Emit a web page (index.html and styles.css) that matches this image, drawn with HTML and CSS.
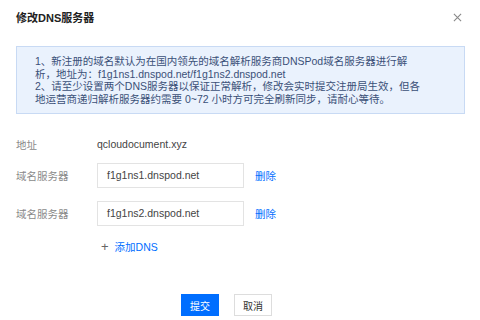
FILE: index.html
```html
<!DOCTYPE html>
<html lang="zh-CN">
<head>
<meta charset="utf-8">
<title>修改DNS服务器</title>
<link rel="stylesheet" href="styles.css">
</head>
<body>
<div class="dialog">
  <div class="header">
    <h1 class="title">修改DNS服务器</h1>
    <svg class="close" viewBox="0 0 10 10" width="9" height="9"><path d="M1 1L9 9M9 1L1 9" stroke="#888" stroke-width="1.2" fill="none"/></svg>
  </div>
  <div class="tip">
    1、新注册的域名默认为在国内领先的域名解析服务商DNSPod域名服务器进行解<br>
    析，地址为：f1g1ns1.dnspod.net/f1g1ns2.dnspod.net<br>
    2、请至少设置两个DNS服务器以保证正常解析，修改会实时提交注册局生效，但各<br>
    地运营商递归解析服务器约需要 0~72 小时方可完全刷新同步，请耐心等待。
  </div>
  <div class="form">
    <div class="row row-text">
      <span class="label">地址</span>
      <span class="value">qcloudocument.xyz</span>
    </div>
    <div class="row">
      <span class="label">域名服务器</span>
      <div class="input">f1g1ns1.dnspod.net</div>
      <a class="link">删除</a>
    </div>
    <div class="row">
      <span class="label">域名服务器</span>
      <div class="input">f1g1ns2.dnspod.net</div>
      <a class="link">删除</a>
    </div>
    <div class="row add-row">
      <span class="label"></span>
      <span class="plus">+</span>
      <a class="link">添加DNS</a>
    </div>
  </div>
  <div class="footer">
    <button class="btn primary">提交</button>
    <button class="btn">取消</button>
  </div>
</div>
</body>
</html>
```
FILE: styles.css
```css
html, body {
  margin: 0;
  padding: 0;
  background: #fff;
}
body {
  font-family: "Liberation Sans", "Noto Sans CJK SC", sans-serif;
  font-size: 10.5px;
  color: #444;
  width: 480px;
  height: 320px;
  overflow: hidden;
}
.dialog {
  padding: 10px 15px 0 16px;
}
.header {
  display: flex;
  justify-content: space-between;
  align-items: center;
  height: 14px;
}
.title {
  margin: 0;
  font-size: 11px;
  font-weight: bold;
  color: #222;
}
.close {
  margin-right: 3px;
}
.tip {
  margin-top: 22px;
  border: 1px solid #c8daf4;
  background: #eaf2fd;
  color: #3a5078;
  padding: 8px 10px 8px 18px;
  line-height: 12.5px;
  white-space: nowrap;
}
.form {
  margin-top: 23px;
}
.row {
  display: flex;
  align-items: center;
  height: 25px;
  margin-bottom: 13px;
}
.row-text {
  height: 14px;
  margin-bottom: 12px;
}
.label {
  width: 81px;
  color: #8a8a8a;
}
.value {
  color: #444;
}
.input {
  box-sizing: border-box;
  width: 147px;
  height: 25px;
  border: 1px solid #e3e3e3;
  padding-left: 9px;
  line-height: 23px;
  color: #444;
}
.link {
  color: #006eff;
  margin-left: 11px;
}
.add-row {
  height: 14px;
  margin-top: 3px;
}
.plus {
  color: #666;
  font-size: 13px;
  margin: 0 6px 0 4px;
}
.add-row .link {
  margin-left: 0;
}
.footer {
  display: flex;
  justify-content: center;
  gap: 15px;
  margin-top: 41px;
  padding-right: 28px;
}
.btn {
  font-family: "Liberation Sans", "Noto Sans CJK SC", sans-serif;
  font-size: 10px;
  width: 38px;
  height: 22px;
  border: 1px solid #ddd;
  background: #fff;
  color: #333;
  padding: 0;
}
.btn.primary {
  background: #006eff;
  border-color: #006eff;
  color: #fff;
}
```
